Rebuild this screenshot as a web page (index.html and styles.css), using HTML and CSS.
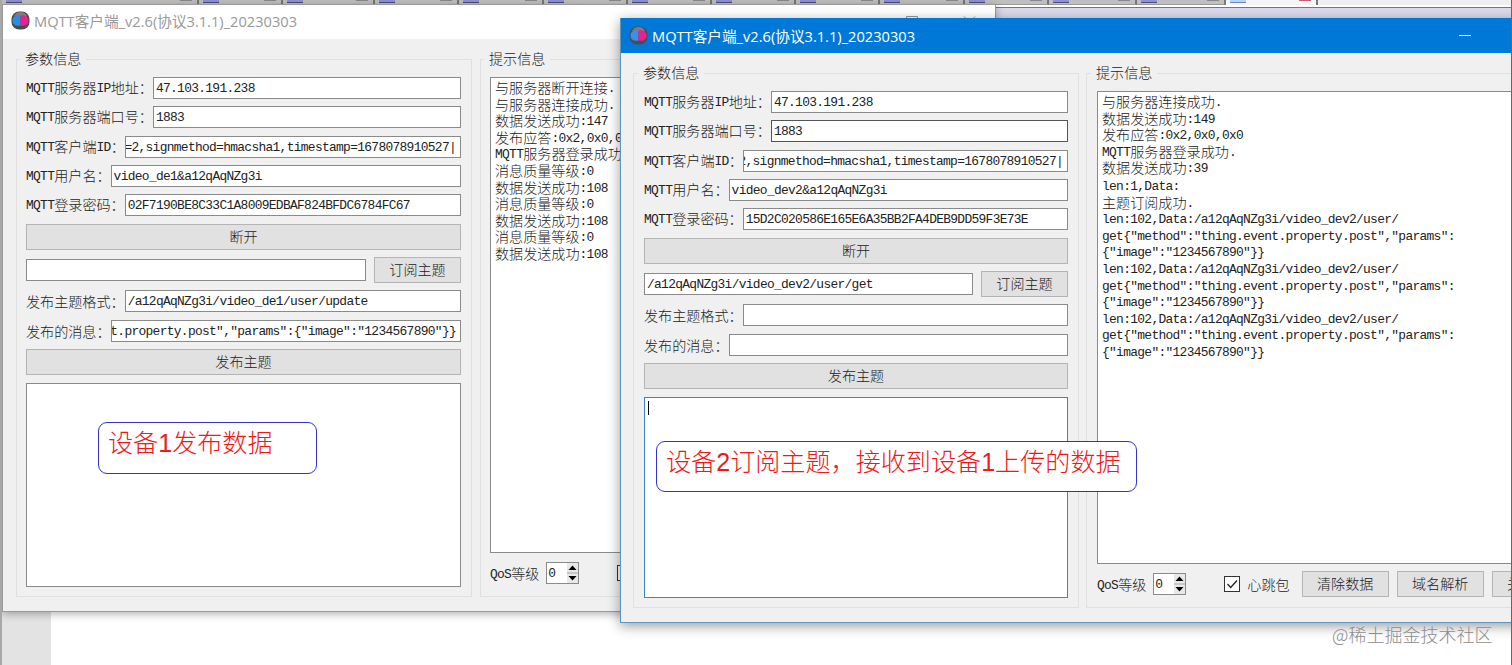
FILE: index.html
```html
<!DOCTYPE html>
<html lang="zh-CN">
<head>
    <meta charset="UTF-8">
    <title>MQTT客户端</title>
    <link rel="stylesheet" href="styles.css">
</head>
<body>
    <div class="desktop">
        <!-- onglets de l'editeur derriere les fenetres -->
        <div class="tabs">
            <div class="tab w198"></div>
            <div class="tab"></div>
            <div class="tab w92"></div>
            <div class="tab"></div>
            <div class="tab"></div>
            <div class="tab"></div>
            <div class="tab"></div>
            <div class="tab"></div>
            <div class="tab"></div>
            <div class="tab"></div>
            <div class="tab"></div>
            <div class="tab w89"></div>
            <div class="tab w89"></div>
            <div class="tab w92 active"></div>
        </div>
        <div class="toolbar"></div>
        <div class="page"></div>

        <!-- device 1 -->
        <div class="window win1">
            <div class="titlebar">
                <svg class="logo" viewBox="0 0 20 20"><rect x="0.5" y="0.5" width="19" height="19" rx="8" fill="#4c4a4e"/><path d="M3 5.500Q5 1 10 1t7 4.500z" fill="#85797d"/><path d="M10 4.500H7a5.500 5.500 0 0 0 0 11H10z" fill="#2b8de0"/><path d="M10 4.500h3a5.500 5.500 0 0 1 0 11H10z" fill="#e8218f"/></svg>
                <span>MQTT客户端_v2.6(协议3.1.1)_20230303</span>
                <svg class="controls" viewBox="0 0 80 12"><path d="M.5.5h11v11H.500zM58 .5l11 11M69 .5l-11 11" fill="none" stroke="#999"/></svg>
            </div>
            <div class="content">
                <div class="group params">
                    <div class="legend">参数信息</div>
                    <div class="row"><label><span class="en">MQTT</span>服务器<span class="en">IP</span>地址：</label><div class="field en">47.103.191.238</div></div>
                    <div class="row"><label><span class="en">MQTT</span>服务器端口号：</label><div class="field en">1883</div></div>
                    <div class="row"><label><span class="en">MQTT</span>客户端<span class="en">ID</span>：</label><div class="field en end">=2,signmethod=hmacsha1,timestamp=1678078910527|</div></div>
                    <div class="row"><label><span class="en">MQTT</span>用户名：</label><div class="field en">video_de1&amp;a12qAqNZg3i</div></div>
                    <div class="row"><label><span class="en">MQTT</span>登录密码：</label><div class="field en">02F7190BE8C33C1A8009EDBAF824BFDC6784FC67</div></div>
                    <button class="btn">断开</button>
                    <div class="row sub"><div class="field en"></div><button class="btn small">订阅主题</button></div>
                    <div class="row"><label>发布主题格式：</label><div class="field en">/a12qAqNZg3i/video_de1/user/update</div></div>
                    <div class="row"><label>发布的消息：</label><div class="field en end">t.property.post","params":{"image":"1234567890"}}</div></div>
                    <button class="btn">发布主题</button>
                    <div class="area"></div>
                </div>
                <div class="group infos">
                    <div class="legend">提示信息</div>
                    <div class="log">
                        <p>与服务器断开连接<span class="en">.</span></p>
                        <p>与服务器连接成功<span class="en">.</span></p>
                        <p>数据发送成功<span class="en">:147</span></p>
                        <p>发布应答<span class="en">:0x2,0x0,0x0</span></p>
                        <p><span class="en">MQTT</span>服务器登录成功<span class="en">.</span></p>
                        <p>消息质量等级<span class="en">:0</span></p>
                        <p>数据发送成功<span class="en">:108</span></p>
                        <p>消息质量等级<span class="en">:0</span></p>
                        <p>数据发送成功<span class="en">:108</span></p>
                        <p>消息质量等级<span class="en">:0</span></p>
                        <p>数据发送成功<span class="en">:108</span></p>
                    </div>
                    <div class="bottom">
                        <span><span class="en">QoS</span>等级</span>
                        <div class="spin"><span class="en">0</span><svg viewBox="0 0 11 20"><path d="M0 0h11v20H0z" fill="#e8e8e8"/><path d="M5.500 2.500l4 4.500h-8zM5.500 17.500l4-4.500h-8z"/><path d="M0 10h11" stroke="#aaa"/></svg></div>
                        <span class="check"></span>
                    </div>
                </div>
            </div>
        </div>

        <!-- device 2 -->
        <div class="window win2">
            <div class="titlebar">
                <svg class="logo" viewBox="0 0 20 20"><rect x="0.5" y="0.5" width="19" height="19" rx="8" fill="#4c4a5e"/><path d="M3 5.500Q5 1 10 1t7 4.500z" fill="#85797d"/><path d="M10 4.500H7a5.500 5.500 0 0 0 0 11H10z" fill="#3b8fe8"/><path d="M10 4.500h3a5.500 5.500 0 0 1 0 11H10z" fill="#e8218f"/></svg>
                <span>MQTT客户端_v2.6(协议3.1.1)_20230303</span>
                <i class="minimize"></i>
            </div>
            <div class="content">
                <div class="group params">
                    <div class="legend">参数信息</div>
                    <div class="row"><label><span class="en">MQTT</span>服务器<span class="en">IP</span>地址：</label><div class="field en">47.103.191.238</div></div>
                    <div class="row"><label><span class="en">MQTT</span>服务器端口号：</label><div class="field en dark">1883</div></div>
                    <div class="row"><label><span class="en">MQTT</span>客户端<span class="en">ID</span>：</label><div class="field en end">2,signmethod=hmacsha1,timestamp=1678078910527|</div></div>
                    <div class="row"><label><span class="en">MQTT</span>用户名：</label><div class="field en">video_dev2&amp;a12qAqNZg3i</div></div>
                    <div class="row"><label><span class="en">MQTT</span>登录密码：</label><div class="field en">15D2C020586E165E6A35BB2FA4DEB9DD59F3E73E</div></div>
                    <button class="btn">断开</button>
                    <div class="row sub"><div class="field en">/a12qAqNZg3i/video_dev2/user/get</div><button class="btn small">订阅主题</button></div>
                    <div class="row"><label>发布主题格式：</label><div class="field en"></div></div>
                    <div class="row"><label>发布的消息：</label><div class="field en"></div></div>
                    <button class="btn">发布主题</button>
                    <div class="area focus"><i class="caret"></i></div>
                </div>
                <div class="group infos">
                    <div class="legend">提示信息</div>
                    <div class="log">
                        <p>与服务器连接成功<span class="en">.</span></p>
                        <p>数据发送成功<span class="en">:149</span></p>
                        <p>发布应答<span class="en">:0x2,0x0,0x0</span></p>
                        <p><span class="en">MQTT</span>服务器登录成功<span class="en">.</span></p>
                        <p>数据发送成功<span class="en">:39</span></p>
                        <p class="data"><span class="en">len:1,Data:</span></p>
                        <p>主题订阅成功<span class="en">.</span></p>
                        <p><span class="en">len:102,Data:/a12qAqNZg3i/video_dev2/user/</span></p>
                        <p><span class="en">get{"method":"thing.event.property.post","params":</span></p>
                        <p><span class="en">{"image":"1234567890"}}</span></p>
                        <p><span class="en">len:102,Data:/a12qAqNZg3i/video_dev2/user/</span></p>
                        <p><span class="en">get{"method":"thing.event.property.post","params":</span></p>
                        <p><span class="en">{"image":"1234567890"}}</span></p>
                        <p><span class="en">len:102,Data:/a12qAqNZg3i/video_dev2/user/</span></p>
                        <p><span class="en">get{"method":"thing.event.property.post","params":</span></p>
                        <p><span class="en">{"image":"1234567890"}}</span></p>
                    </div>
                    <div class="bottom">
                        <span><span class="en">QoS</span>等级</span>
                        <div class="spin"><span class="en">0</span><svg viewBox="0 0 11 20"><path d="M0 0h11v20H0z" fill="#e8e8e8"/><path d="M5.500 2.500l4 4.500h-8zM5.500 17.500l4-4.500h-8z"/><path d="M0 10h11" stroke="#aaa"/></svg></div>
                        <span class="check"><svg viewBox="0 0 14 14"><path d="M2.500 7l3.200 3.500L12 3.500" fill="none" stroke="#222" stroke-width="1.300"/></svg></span>
                        <span class="beat">心跳包</span>
                        <button class="btn small">清除数据</button>
                        <button class="btn small">域名解析</button>
                        <button class="btn small">关于软件</button>
                    </div>
                </div>
            </div>
        </div>

        <div class="note note1">设备<span>1</span>发布数据</div>
        <div class="note note2">设备<span>2</span>订阅主题，接收到设备<span>1</span>上传的数据</div>
        <div class="watermark">@稀土掘金技术社区</div>
    </div>
</body>
</html>
```

FILE: styles.css
```css
body {
    margin: 0;
    font-family: "Noto Sans CJK SC", sans-serif;
    font-size: 14.1px;
    font-weight: 300;
    color: #222;
}

.desktop {
    position: relative;
    width: 1512px;
    height: 665px;
    overflow: hidden;
    background-color: #fff;
    box-sizing: border-box;
    border-left: 2px solid #a8a8a8;
    border-right: 1px solid #666;
}

/* latin text, half the width of a chinese character */
.en {
    font-family: "Liberation Mono", monospace;
    font-size: 12.9px;
    letter-spacing: -0.68px;
    font-weight: 400;
}

label .en, p .en, .bottom .en {
    vertical-align: 1px;
}

/* editor tabs */
.tabs {
    display: flex;
    height: 5px;
    background-color: #efefef;
}

.tab {
    display: flex;
    justify-content: space-between;
    flex: none;
    width: 84.2px;
    height: 5px;
    box-sizing: border-box;
    padding: 0 5px 0 4px;
    background-color: #bfbfbf;
    border-right: 2px solid #777;
    border-bottom: 1px solid #999;
}

.tab::before {
    content: "";
    width: 16px;
    height: 2px;
    background-color: #8d93d0;
    border-bottom: 1px solid #4a4a80;
}

.tab::after {
    content: "";
    width: 12px;
    height: 1px;
    background-color: #888;
}

.w198 { width: 197px; }
.w92 { width: 92px; }
.w89 { width: 88.5px; }

.active {
    background-color: #f5f5f5;
    border-bottom: none;
}

.active::before {
    background-color: #b9d4f5;
    border-color: #6a86c8;
}

.active::after {
    background-color: #c06070;
}

.toolbar {
    height: 12px;
    margin-top: 2px;
    background-color: #dcdaec;
    border-top: 1px solid #777;
}

.page {
    width: 49px;
    height: 646px;
    background-color: #e3e3e3;
}

/* windows */
.window {
    position: absolute;
    display: flex;
    flex-direction: column;
    box-sizing: border-box;
    background-color: #f0f0f0;
}

.win1 {
    left: 0;
    top: 4px;
    width: 994px;
    height: 608px;
    border: 1px solid #999;
    box-shadow: 0 2px 8px rgba(0,0,0,0.3);
}

.win2 {
    left: 618px;
    top: 18px;
    width: 1000px;
    height: 605px;
    border: 1px solid #5d96bd;
    border-top: none;
    box-shadow: 0 3px 12px rgba(0,0,0,0.4);
}

.titlebar {
    position: relative;
    display: flex;
    align-items: center;
    flex: none;
    box-sizing: border-box;
    height: 34px;
    padding-left: 8px;
    padding-bottom: 3px;
    background-color: #fff;
    color: #999;
    font-family: "Open Sans", "Noto Sans CJK SC", sans-serif;
    font-size: 14.65px;
    font-weight: 400;
}

.win2 .titlebar {
    height: 35px;
    padding-bottom: 1px;
    background-color: #0078d7;
    color: #fff;
}

.logo {
    width: 19px;
    height: 19px;
    margin-right: 4px;
}

.controls {
    position: absolute;
    left: 903px;
    top: 11px;
    width: 80px;
    height: 12px;
}

.minimize {
    position: absolute;
    left: 838px;
    top: 17px;
    width: 12px;
    height: 1px;
    background-color: #fff;
}

.content {
    display: flex;
    flex: 1;
    gap: 7px;
    padding: 20px 0 14px 13px;
}

.win2 .content {
    padding: 20px 0 14px 12px;
}

.group {
    position: relative;
    display: flex;
    flex-direction: column;
    box-sizing: border-box;
    border: 1px solid #e0e0e0;
    padding: 17px 10px 9px 9px;
}

.legend {
    position: absolute;
    left: 3px;
    top: -12px;
    padding: 0 5px;
    line-height: 20px;
    background-color: #f0f0f0;
}

.params {
    flex: none;
    width: 456px;
    gap: 7.27px;
}

.win2 .params {
    width: 446px;
    padding-left: 10px;
}

.win2 .legend {
    left: 4px;
}

.infos {
    flex: 1;
    margin-left: 1px;
    padding-bottom: 10px;
}

.win2 .infos {
    padding-left: 10px;
    margin-left: 0;
}

.row {
    display: flex;
    align-items: center;
    height: 22px;
}

.row label {
    white-space: nowrap;
    line-height: 20px;
}

.field {
    flex: 1;
    display: flex;
    align-items: center;
    min-width: 0;
    height: 22px;
    box-sizing: border-box;
    padding: 1px 4px 0 2px;
    border: 1px solid #8a8a8a;
    background-color: #fff;
    overflow: hidden;
    white-space: pre;
}

.end {
    justify-content: flex-end;
}

.dark {
    border-color: #555;
}

.btn {
    flex: none;
    height: 26px;
    margin: 0.5px 0;
    padding: 0 0 2px;
    border: 1px solid #b4b4b4;
    background-color: #e1e1e1;
    font-family: inherit;
    font-size: 14.1px;
    font-weight: 300;
    color: #222;
}

.small {
    width: 87px;
}

.sub {
    height: 25.5px;
    gap: 8px;
}

.area {
    flex: 1;
    border: 1px solid #8a8a8a;
    background-color: #fff;
}

.focus {
    border-color: #3a87bd;
}

.caret {
    display: block;
    width: 1px;
    height: 14px;
    margin: 3px;
    background-color: #000;
}

.log {
    flex: 1;
    border: 1px solid #8a8a8a;
    background-color: #fff;
    padding: 1px 4px;
}

.log p {
    margin: 0;
    height: 16.6px;
    line-height: 16.6px;
    white-space: nowrap;
}

.log .data {
    margin-top: 1px;
}

/* QoS line */
.bottom {
    display: flex;
    align-items: center;
    height: 26px;
    margin-top: 7px;
    white-space: nowrap;
}

.spin {
    display: flex;
    align-items: center;
    justify-content: space-between;
    width: 30px;
    height: 20px;
    margin-left: 7px;
    padding-left: 1px;
    border: 1px solid #8a8a8a;
    background-color: #fff;
    box-sizing: content-box;
}

.spin svg {
    width: 11px;
    height: 20px;
}

.check {
    flex: none;
    width: 14px;
    height: 14px;
    margin-left: 38px;
    border: 1px solid #333;
    background-color: #fff;
}

.check svg {
    display: block;
}

.beat {
    margin-left: 7px;
}

.bottom .btn {
    margin-left: 8px;
}

.bottom .beat + .btn {
    margin-left: 12px;
}

/* annotations */
.note {
    position: absolute;
    box-sizing: border-box;
    border: 1px solid #3333cc;
    border-radius: 9px;
    background-color: #fff;
    color: #f01818;
    font-size: 25.1px;
    line-height: 37px;
    padding-left: 9px;
    white-space: nowrap;
}

.note span {
    font-family: "Liberation Sans", sans-serif;
    font-weight: 400;
}

.note1 {
    left: 96px;
    top: 422px;
    width: 219px;
    height: 52px;
}

.note2 {
    left: 654px;
    top: 441px;
    width: 481px;
    height: 51px;
}

.watermark {
    position: absolute;
    left: 1330px;
    top: 621px;
    font-size: 18px;
    line-height: 26px;
    color: #8c8c8c;
}
```
